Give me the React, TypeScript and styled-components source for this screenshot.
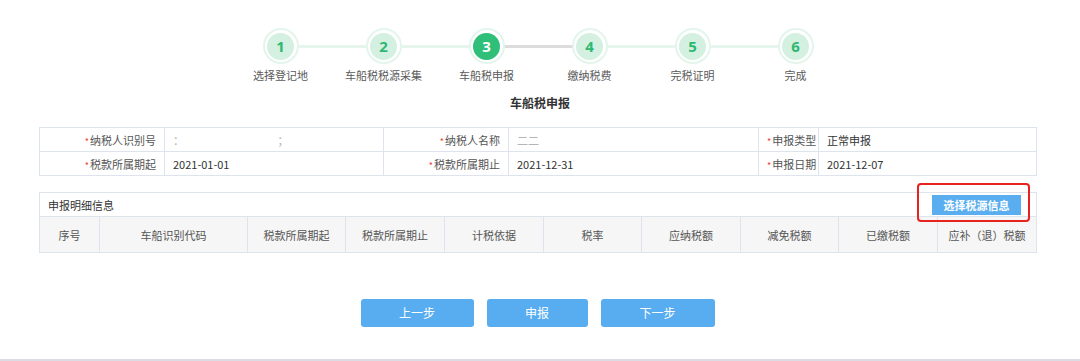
import styled, { createGlobalStyle } from 'styled-components';

const GlobalStyle = createGlobalStyle`
  html, body {
    margin: 0;
    padding: 0;
    background: #ffffff;
    font-family: "Noto Sans CJK SC", "Noto Sans", "Liberation Sans", sans-serif;
  }
`;

const steps = ['选择登记地', '车船税税源采集', '车船税申报', '缴纳税费', '完税证明', '完成'];
const current = 3;

const infoRows = [
  [
    { label: '纳税人识别号', value: '：　　　　　　　　　；', masked: true },
    { label: '纳税人名称', value: '二二', masked: true },
    { label: '申报类型', value: '正常申报' },
  ],
  [
    { label: '税款所属期起', value: '2021-01-01' },
    { label: '税款所属期止', value: '2021-12-31' },
    { label: '申报日期', value: '2021-12-07' },
  ],
];
const infoCols = [125, 219, 125, 250, 60, 218];

const detailCols = [
  { title: '序号', width: 60 },
  { title: '车船识别代码', width: 148 },
  { title: '税款所属期起', width: 98 },
  { title: '税款所属期止', width: 99 },
  { title: '计税依据', width: 99 },
  { title: '税率', width: 98 },
  { title: '应纳税额', width: 99 },
  { title: '减免税额', width: 98 },
  { title: '已缴税额', width: 99 },
  { title: '应补（退）税额', width: 99 },
];

const App: React.FC = () => {
  return (
    <Page>
      <GlobalStyle />
      <Stepper>
        {steps.map((name, i) => {
          const n = i + 1;
          return (
            <Step key={name}>
              <CircleRow $first={n === 1} $gray={n === current + 1}>
                <Ring>
                  <Dot $active={n === current}>{n}</Dot>
                </Ring>
              </CircleRow>
              <StepLabel>{name}</StepLabel>
            </Step>
          );
        })}
      </Stepper>

      <Title>车船税申报</Title>

      <InfoTable>
        <colgroup>
          {infoCols.map((w, i) => (
            <col key={i} style={{ width: w }} />
          ))}
        </colgroup>
        <tbody>
          {infoRows.map((row, r) => (
            <tr key={r}>
              {row.map((cell) => (
                <InfoPair key={cell.label}>
                  <LabelCell>
                    <Star>*</Star>
                    {cell.label}
                  </LabelCell>
                  <ValueCell $masked={cell.masked}>{cell.value}</ValueCell>
                </InfoPair>
              ))}
            </tr>
          ))}
        </tbody>
      </InfoTable>

      <DetailTable>
        <colgroup>
          {detailCols.map((c) => (
            <col key={c.title} style={{ width: c.width }} />
          ))}
        </colgroup>
        <thead>
          <tr>
            <CaptionCell colSpan={detailCols.length}>
              <CaptionBar>
                <span>申报明细信息</span>
                <SelectButton>选择税源信息</SelectButton>
                <Highlight />
              </CaptionBar>
            </CaptionCell>
          </tr>
          <tr>
            {detailCols.map((c) => (
              <HeadCell key={c.title}>{c.title}</HeadCell>
            ))}
          </tr>
        </thead>
      </DetailTable>

      <Actions>
        <ActionButton $w={113}>上一步</ActionButton>
        <ActionButton $w={101}>申报</ActionButton>
        <ActionButton $w={114}>下一步</ActionButton>
      </Actions>

      <Footer />
    </Page>
  );
};

const InfoPair: React.FC<{ children: React.ReactNode }> = ({ children }) => <>{children}</>;

const Page = styled.div`
  width: 1080px;
  height: 361px;
  overflow: hidden;
  display: flex;
  flex-direction: column;
`;

const Stepper = styled.div`
  display: flex;
  justify-content: center;
  padding-top: 28px;
  margin-left: -4px;
`;

const Step = styled.div`
  width: 103px;
  display: flex;
  flex-direction: column;
  align-items: center;
`;

const CircleRow = styled.div<{ $first?: boolean; $gray?: boolean }>`
  position: relative;
  width: 100%;
  display: flex;
  justify-content: center;

  &::before {
    content: '';
    display: ${({ $first }) => ($first ? 'none' : 'block')};
    position: absolute;
    top: 17px;
    left: -50%;
    width: 100%;
    height: 3px;
    background: ${({ $gray }) => ($gray ? '#dcdcdc' : '#e6f6ee')};
  }
`;

const Ring = styled.div`
  position: relative;
  z-index: 1;
  width: 36px;
  height: 36px;
  box-sizing: border-box;
  border: 2px solid #e3f5ec;
  border-radius: 50%;
  background: #ffffff;
  display: flex;
  align-items: center;
  justify-content: center;
`;

const Dot = styled.div<{ $active?: boolean }>`
  width: 27px;
  height: 27px;
  border-radius: 50%;
  background: ${({ $active }) => ($active ? '#2fbf79' : '#d3f0e0')};
  color: ${({ $active }) => ($active ? '#ffffff' : '#2fb872')};
  font-family: "Noto Sans", "Liberation Sans", sans-serif;
  font-weight: 700;
  font-size: 15px;
  line-height: 27px;
  text-align: center;
`;

const StepLabel = styled.div`
  margin-top: 4px;
  font-size: 11px;
  line-height: 14px;
  color: #5a5a5a;
  white-space: nowrap;
`;

const Title = styled.div`
  margin-top: 13px;
  text-align: center;
  font-size: 12px;
  line-height: 16px;
  font-weight: 700;
  color: #333333;
`;

const InfoTable = styled.table`
  margin: 16px 0 0 39px;
  width: 997px;
  border-collapse: collapse;
  table-layout: fixed;
  font-size: 11px;
`;

const LabelCell = styled.td`
  height: 23px;
  padding: 0 8px;
  border: 1px solid #dde4ed;
  text-align: right;
  color: #555555;
  white-space: nowrap;
`;

const Star = styled.span`
  color: #ee3b3b;
  font-size: 9px;
  margin-right: 1px;
`;

const ValueCell = styled.td<{ $masked?: boolean }>`
  height: 23px;
  padding: 0 8px;
  border: 1px solid #dde4ed;
  color: ${({ $masked }) => ($masked ? '#b5b5b5' : '#333333')};
  white-space: nowrap;
  overflow: hidden;
`;

const DetailTable = styled.table`
  margin: 16px 0 0 39px;
  width: 997px;
  border-collapse: collapse;
  table-layout: fixed;
  font-size: 11px;
`;

const CaptionCell = styled.th`
  height: 23px;
  padding: 0;
  border: 1px solid #dde4ed;
  background: #ffffff;
  font-weight: 400;
`;

const CaptionBar = styled.div`
  position: relative;
  height: 23px;
  display: flex;
  align-items: center;
  justify-content: space-between;
  padding: 0 15px 0 8px;
  color: #333333;
  font-size: 11px;
`;

const SelectButton = styled.div`
  width: 89px;
  height: 20px;
  margin-top: 1px;
  background: #5aaef0;
  color: #ffffff;
  font-weight: 700;
  font-size: 11px;
  line-height: 20px;
  text-align: center;
`;

const Highlight = styled.div`
  position: absolute;
  right: 6px;
  top: -10px;
  width: 113px;
  height: 39px;
  box-sizing: border-box;
  border: 2px solid #e8221f;
  border-radius: 4px;
`;

const HeadCell = styled.th`
  height: 35px;
  padding: 0;
  border: 1px solid #dde4ed;
  background: #f6f6f6;
  color: #555555;
  font-weight: 400;
  text-align: center;
  white-space: nowrap;
`;

const Actions = styled.div`
  margin-top: 46px;
  display: flex;
  justify-content: center;
  gap: 13px;
  padding-right: 5px;
`;

const ActionButton = styled.div<{ $w: number }>`
  width: ${({ $w }) => $w}px;
  height: 28px;
  border-radius: 3px;
  background: #58adf1;
  color: #ffffff;
  font-size: 12px;
  line-height: 28px;
  text-align: center;
`;

const Footer = styled.div`
  margin-top: auto;
  height: 2px;
  background: #dcdce4;
`;

export default App;
